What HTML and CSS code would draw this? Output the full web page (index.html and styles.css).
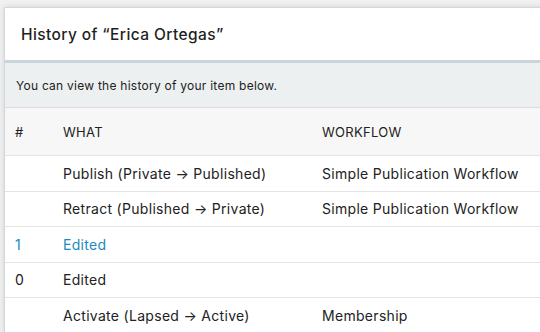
FILE: index.html
```html
<!DOCTYPE html>
<html lang="en">

<head>
  <meta charset="utf-8" />
  <title>History</title>
  <link rel="stylesheet" href="styles.css">
</head>

<body>
  <div class="modal">
    <div class="modal-header">
      <h2>History of “Erica Ortegas”</h2>
    </div>
    <div class="modal-info">You can view the history of your item below.</div>

    <table class="history">
      <tr>
        <th class="num">#</th>
        <th class="what">What</th>
        <th>Workflow</th>
      </tr>
      <tr>
        <td class="num"></td>
        <td>Publish (Private → Published)</td>
        <td>Simple Publication Workflow</td>
      </tr>
      <tr>
        <td class="num"></td>
        <td>Retract (Published → Private)</td>
        <td>Simple Publication Workflow</td>
      </tr>
      <tr>
        <td class="num"><a href="#">1</a></td>
        <td><a href="#">Edited</a></td>
        <td></td>
      </tr>
      <tr>
        <td class="num">0</td>
        <td>Edited</td>
        <td></td>
      </tr>
      <tr>
        <td class="num"></td>
        <td>Activate (Lapsed → Active)</td>
        <td>Membership</td>
      </tr>
    </table>
  </div>
</body>

</html>
```

FILE: styles.css
```css
body {
  margin: 0;
  background-color: #f1f1f1;
  font-family: Inter, "Open Sans", sans-serif;
  color: #222;
  overflow: hidden;
}

.modal {
  width: 620px;
  margin: 7px 0 0 4px;
  background-color: #fff;
  border: 1px solid #cfd9dc;
  box-shadow: 0 0 6px rgba(0, 0, 0, 0.12);
}

.modal-header {
  height: 52px;
  padding: 0 16px;
  display: flex;
  align-items: center;
  border-bottom: 3px solid #c8d6db;
}

.modal-header h2 {
  margin: 0;
  font-size: 15.5px;
  font-weight: 500;
  letter-spacing: 0.4px;
  color: #1f1f1f;
}

.modal-info {
  height: 44px;
  padding: 0 11px;
  display: flex;
  align-items: center;
  background-color: #ecf0f1;
  border-bottom: 1px solid #dcdcdc;
  font-size: 12px;
  letter-spacing: 0.25px;
  color: #222;
}

.history {
  width: 100%;
  border-collapse: collapse;
  font-size: 14px;
  letter-spacing: 0.3px;
}

.history th {
  height: 47px;
  background-color: #f8f7f7;
  text-align: left;
  font-weight: 400;
  font-size: 13px;
  text-transform: uppercase;
  padding: 0;
}

.history td {
  height: 34.5px;
  border-top: 1px solid #e4e4e4;
  padding: 0;
  color: #222;
}

.history .num {
  width: 48px;
  padding-left: 10px;
}

.history .what {
  width: 259px;
}

.history a {
  color: #1a8bc0;
  text-decoration: none;
}
```
